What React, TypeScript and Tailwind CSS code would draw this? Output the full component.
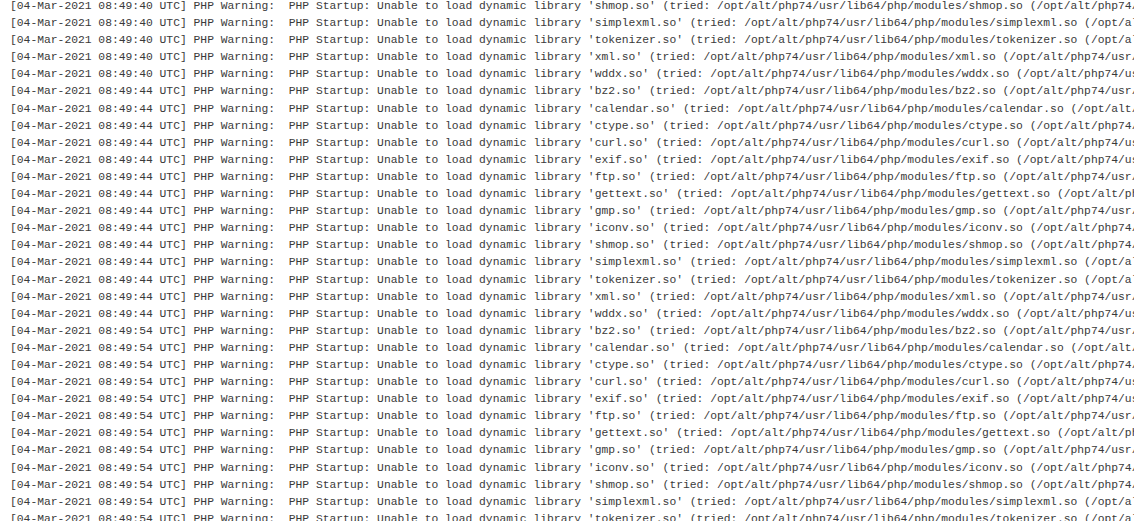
import React from "react";

const entries: [string, string][] = [
  ["40", "shmop"],
  ["40", "simplexml"],
  ["40", "tokenizer"],
  ["40", "xml"],
  ["40", "wddx"],
  ["44", "bz2"],
  ["44", "calendar"],
  ["44", "ctype"],
  ["44", "curl"],
  ["44", "exif"],
  ["44", "ftp"],
  ["44", "gettext"],
  ["44", "gmp"],
  ["44", "iconv"],
  ["44", "shmop"],
  ["44", "simplexml"],
  ["44", "tokenizer"],
  ["44", "xml"],
  ["44", "wddx"],
  ["54", "bz2"],
  ["54", "calendar"],
  ["54", "ctype"],
  ["54", "curl"],
  ["54", "exif"],
  ["54", "ftp"],
  ["54", "gettext"],
  ["54", "gmp"],
  ["54", "iconv"],
  ["54", "shmop"],
  ["54", "simplexml"],
  ["54", "tokenizer"],
];

function line(sec: string, mod: string) {
  return `[04-Mar-2021 08:49:${sec} UTC] PHP Warning:  PHP Startup: Unable to load dynamic library '${mod}.so' (tried: /opt/alt/php74/usr/lib64/php/modules/${mod}.so (/opt/alt/php74/usr/lib64/php/modules/${mod}.so.so: cannot open shared object file: No such file or directory)) in Unknown on line 0`;
}

export default function App() {
  return (
    <div className="h-[525px] w-[1134px] bg-white">
      <div className="h-[521px] overflow-hidden">
        <div className="-mt-[2px] pl-[10px] font-['Liberation_Mono',monospace] text-[11.33px] leading-[17.1px] text-[#3a3a3a] whitespace-pre">
          {entries.map(([sec, mod], i) => (
            <div key={i}>{line(sec, mod)}</div>
          ))}
        </div>
      </div>
    </div>
  );
}
